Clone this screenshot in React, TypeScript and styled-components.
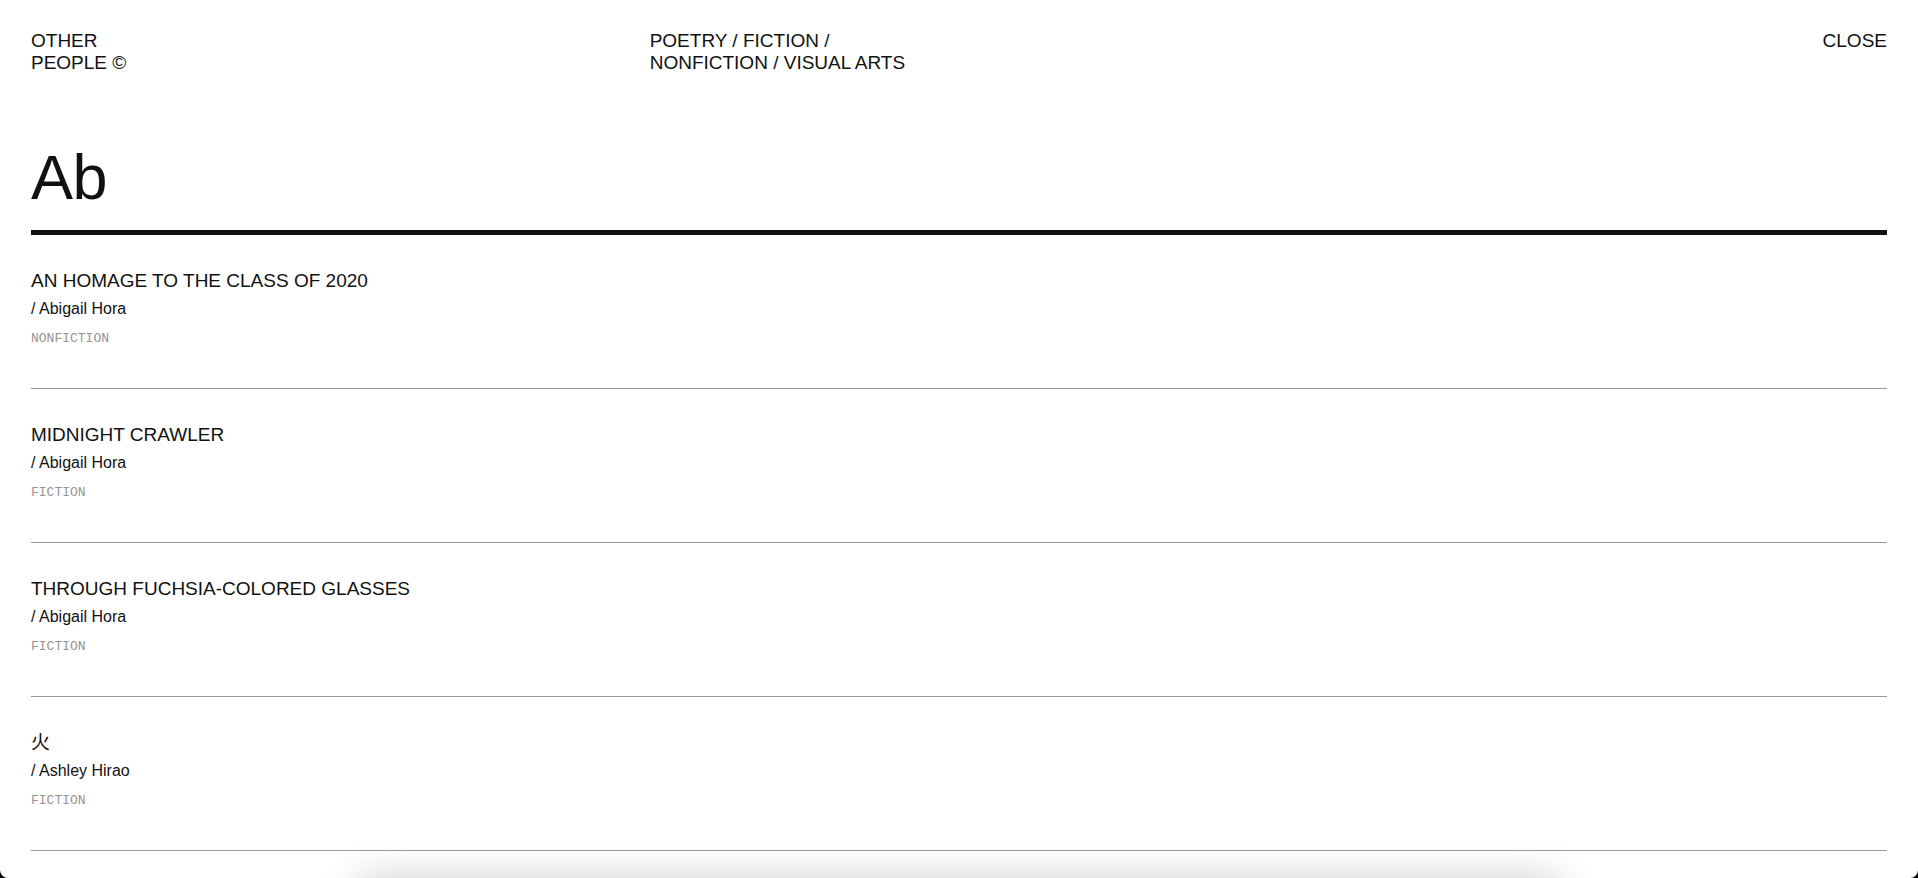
import React from "react";
import styled, { createGlobalStyle } from "styled-components";

const GlobalStyle = createGlobalStyle`
  html, body {
    margin: 0;
    padding: 0;
    background: #000;
  }
  body {
    font-family: "Liberation Sans", Arial, Helvetica, sans-serif;
    color: #111;
  }
  * { box-sizing: border-box; }
`;

const Frame = styled.div`
  height: 100vh;
  overflow: hidden;
  background: #fff;
  border-radius: 0 0 8px 8px;
  padding: 0 31px;
`;

const Header = styled.header`
  display: grid;
  grid-template-columns: repeat(3, 1fr);
  padding-top: 30px;
  font-size: 19px;
  line-height: 22px;
  text-transform: uppercase;
`;

const HeaderCell = styled.div<{ $align?: "left" | "right" }>`
  text-align: ${(p) => p.$align ?? "left"};
  white-space: nowrap;
`;

const Letter = styled.h1`
  margin: 70px 0 0;
  padding-bottom: 19px;
  border-bottom: 5px solid #111;
  font-size: 63px;
  line-height: 67px;
  font-weight: 400;
  letter-spacing: -0.5px;
`;

const List = styled.ul`
  list-style: none;
  margin: 0;
  padding: 0;
`;

const Row = styled.li`
  display: flex;
  flex-direction: column;
  padding: 35px 0 41px;
  border-bottom: 1px solid #9a9a9a;
`;

const Title = styled.div`
  font-size: 19px;
  line-height: 22px;
  font-family: "Liberation Sans", Arial, "Noto Sans CJK JP", sans-serif;
`;

const Author = styled.div`
  margin-top: 7px;
  font-size: 16px;
  line-height: 20px;
`;

const Kind = styled.div`
  margin-top: 12px;
  font-family: "Liberation Mono", "DejaVu Sans Mono", monospace;
  font-size: 13px;
  line-height: 16px;
  color: #949494;
  text-transform: uppercase;
`;

const PeekShadow = styled.div`
  position: fixed;
  top: 100%;
  left: 50%;
  width: 1200px;
  height: 60px;
  transform: translateX(-50%);
  background: #fff;
  box-shadow: 0 0 40px rgba(0, 0, 0, 0.2);
`;

type Entry = { title: string; author: string; kind: string };

const entries: Entry[] = [
  { title: "AN HOMAGE TO THE CLASS OF 2020", author: "Abigail Hora", kind: "Nonfiction" },
  { title: "MIDNIGHT CRAWLER", author: "Abigail Hora", kind: "Fiction" },
  { title: "THROUGH FUCHSIA-COLORED GLASSES", author: "Abigail Hora", kind: "Fiction" },
  { title: "火", author: "Ashley Hirao", kind: "Fiction" },
];

export default function App() {
  return (
    <>
      <GlobalStyle />
      <Frame>
        <Header>
          <HeaderCell>
            OTHER
            <br />
            PEOPLE ©
          </HeaderCell>
          <HeaderCell>
            POETRY / FICTION /
            <br />
            NONFICTION / VISUAL ARTS
          </HeaderCell>
          <HeaderCell $align="right">CLOSE</HeaderCell>
        </Header>
        <Letter>Ab</Letter>
        <List>
          {entries.map((e) => (
            <Row key={e.title}>
              <Title>{e.title}</Title>
              <Author>/ {e.author}</Author>
              <Kind>{e.kind}</Kind>
            </Row>
          ))}
        </List>
      </Frame>
      <PeekShadow />
    </>
  );
}
